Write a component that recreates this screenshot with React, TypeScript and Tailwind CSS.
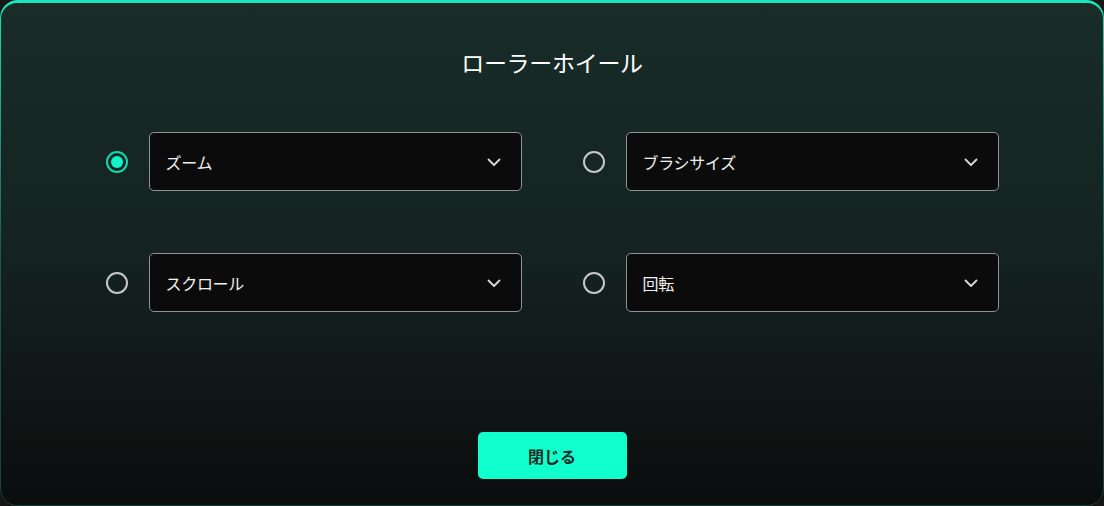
import React, { useState } from "react";

const options = [
    { id: "zoom", label: "ズーム" },
    { id: "brush", label: "ブラシサイズ" },
    { id: "scroll", label: "スクロール" },
    { id: "rotate", label: "回転" },
];

function Chevron() {
    return (
        <svg width="18" height="18" viewBox="0 0 18 18" fill="none" className="text-[#d8d8d8]">
            <path d="M3.5 6.5 L9 12 L14.5 6.5" stroke="currentColor" strokeWidth="1.8" strokeLinecap="round" strokeLinejoin="round" />
        </svg>
    );
}

function Option({ label, checked, onSelect }: { label: string; checked: boolean; onSelect: () => void }) {
    return (
        <div className="flex items-center gap-[21px]">
            {/* radio */}
            <button
                onClick={onSelect}
                className={`flex h-[22px] w-[22px] items-center justify-center rounded-full border-2 ${
                    checked ? "border-[#14d9b0]" : "border-[#c8c8c8]"
                }`}
            >
                {checked && <span className="h-[12px] w-[12px] rounded-full bg-[#12f5c8]" />}
            </button>
            {/* select */}
            <div className="flex h-[59px] w-[373px] items-center justify-between rounded-[5px] border border-[#8e9493] bg-[#0b0b0b] pl-[16px] pr-[18px]">
                <span className="text-[16px] tracking-[-0.3px] text-[#f0f0f0]">{label}</span>
                <Chevron />
            </div>
        </div>
    );
}

export default function App() {
    const [selected, setSelected] = useState("zoom");

    return (
        <div
            className="h-[506px] w-[1104px] bg-[#161616]"
            style={{ fontFamily: '"Noto Sans CJK JP", "Noto Sans", sans-serif' }}
        >
            <div className="h-full w-full rounded-[18px] bg-gradient-to-b from-[#19e6bf] via-[#1d5a4d] to-[#1a3f37] pt-[3px] px-[1px] pb-[1px]">
                <div className="flex h-full w-full flex-col items-center rounded-[16px] bg-gradient-to-b from-[#192c28] via-[#142320] to-[#0b0d0d]">
                    <h1 className="mt-[42px] text-[23px] leading-[34px] tracking-[-0.3px] text-white">ローラーホイール</h1>

                    <div className="mt-[53px] grid grid-cols-2 gap-x-[61px] gap-y-[62px]">
                        {options.map((o) => (
                            <Option
                                key={o.id}
                                label={o.label}
                                checked={selected === o.id}
                                onSelect={() => setSelected(o.id)}
                            />
                        ))}
                    </div>

                    <button className="mt-[120px] h-[47px] w-[149px] rounded-[5px] bg-[#10ffcc] text-[16px] font-bold text-[#1b2a26]">
                        閉じる
                    </button>
                </div>
            </div>
        </div>
    );
}
